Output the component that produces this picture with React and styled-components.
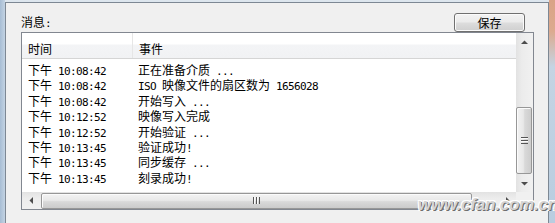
import React from 'react';
import styled, { createGlobalStyle } from 'styled-components';

const GlobalStyle = createGlobalStyle`
  html, body {
    margin: 0;
    padding: 0;
    overflow: hidden;
  }
  body {
    font-family: "Noto Sans CJK SC", "Noto Sans", sans-serif;
    font-size: 12px;
    color: #000;
  }
`;

const Desktop = styled.div`
  position: relative;
  width: 555px;
  height: 223px;
  box-sizing: border-box;
  padding: 2px 6px 0 5px;
  background:
    linear-gradient(to bottom, #d9a386 0, #dcaa8f 14%, #c4d4e3 30%, #b9cde0 100%) right top / 6px 100% no-repeat,
    linear-gradient(to right, #a7bdd4, #c3d3e3) left top / 5px 100% no-repeat,
    #dde6ee;
  overflow: hidden;
`;

const Dialog = styled.div`
  height: 100%;
  box-sizing: border-box;
  display: flex;
  flex-direction: column;
  padding: 0 14px 0 15px;
  background: #f0f0f0;
  border: 1px solid #7d8894;
  border-bottom: none;
`;

const Toolbar = styled.div`
  height: 29px;
  display: flex;
  align-items: flex-end;
  justify-content: space-between;
  padding-right: 9px;
`;

const Label = styled.div`
  line-height: 14px;
  margin-bottom: 1px;
`;

const Button = styled.button`
  width: 71px;
  height: 19px;
  box-sizing: border-box;
  padding: 0;
  font: inherit;
  line-height: 16px;
  color: #000;
  border: 1px solid #707070;
  border-radius: 3px;
  background: linear-gradient(to bottom, #f3f3f3 0, #ebebeb 48%, #dddddd 52%, #cfcfcf 100%);
  box-shadow: inset 0 0 0 1px #fbfbfb;
`;

const ListBox = styled.div`
  height: 178px;
  box-sizing: border-box;
  border: 1px solid #828790;
  background: #fff;
  display: grid;
  grid-template-columns: 1fr 17px;
  grid-template-rows: 1fr 17px;
`;

const Content = styled.div`
  overflow: hidden;
`;

const Header = styled.div`
  display: flex;
  height: 25px;
  border-bottom: 1px solid #d5d5d5;
  background: linear-gradient(to bottom, #ffffff 0, #ffffff 44%, #f3f4f6 48%, #f1f2f4 100%);
`;

const HeaderCell = styled.div`
  width: ${p => (p.$width ? `${p.$width}px` : 'auto')};
  flex: ${p => (p.$width ? 'none' : '1')};
  box-sizing: border-box;
  display: flex;
  align-items: center;
  padding: 5px 0 0 6px;
  border-right: ${p => (p.$divider ? '1px solid #e6e6e6' : 'none')};
`;

const Rows = styled.div`
  padding-top: 3px;
`;

const Row = styled.div`
  display: flex;
  height: 15.4px;
  line-height: 15.4px;
  white-space: nowrap;
`;

const Cell = styled.div`
  width: ${p => (p.$width ? `${p.$width}px` : 'auto')};
  flex: ${p => (p.$width ? 'none' : '1')};
  box-sizing: border-box;
  padding-left: 6px;
`;

const Latin = styled.span`
  font-family: "DejaVu Sans Mono", "Liberation Mono", monospace;
  font-size: 11px;
  letter-spacing: -0.62px;
  white-space: pre;
`;

const VScroll = styled.div`
  display: flex;
  flex-direction: column;
  background: linear-gradient(to right, #e2e2e2 0, #ececec 35%, #f1f1f1 100%);
`;

const HScroll = styled.div`
  display: flex;
  background: linear-gradient(to bottom, #e2e2e2 0, #ececec 35%, #f1f1f1 100%);
`;

const ArrowButton = styled.div`
  flex: none;
  width: 17px;
  height: 17px;
  display: flex;
  align-items: center;
  justify-content: center;
`;

const VTrack = styled.div`
  flex: 1;
  display: flex;
  flex-direction: column;
  justify-content: flex-end;
  padding: 0 1px 1px 0;
`;

const HTrack = styled.div`
  flex: 1;
  display: flex;
  align-items: center;
  padding-left: 2px;
`;

const VThumb = styled.div`
  height: 67px;
  box-sizing: border-box;
  border: 1px solid #979797;
  border-radius: 2px;
  background: linear-gradient(to right, #f2f2f2 0, #e8e8e8 45%, #d9d9d9 55%, #cdcdcd 100%);
  box-shadow: inset 1px 1px 0 #fbfbfb;
  display: flex;
  align-items: center;
  justify-content: center;
`;

const HThumb = styled.div`
  width: 431px;
  height: 16px;
  box-sizing: border-box;
  border: 1px solid #979797;
  border-radius: 2px;
  background: linear-gradient(to bottom, #f3f3f3 0, #e9e9e9 45%, #d9d9d9 55%, #cbcbcb 100%);
  box-shadow: inset 1px 1px 0 #fbfbfb;
  display: flex;
  align-items: center;
  justify-content: center;
`;

const Corner = styled.div`
  background: #f0f0f0;
`;

const Watermark = styled.div`
  position: absolute;
  right: -3px;
  bottom: 8px;
  font-family: "Liberation Sans", Arial, sans-serif;
  font-size: 17px;
  font-weight: bold;
  font-style: italic;
  letter-spacing: -0.2px;
  color: #d4d4d4;
  text-shadow: 1px 1px 0 #6e6e6e, -1px -1px 0 #ffffff, 1px -1px 0 #ffffff, -1px 1px 0 #ffffff;
  pointer-events: none;
`;

const Arrow = ({ dir }) => {
  const points = {
    up: '0,4 3.5,0.5 7,4',
    down: '0,0 3.5,3.5 7,0',
    left: '4,0 0.5,3.5 4,7',
    right: '0,0 3.5,3.5 0,7',
  }[dir];
  const vertical = dir === 'up' || dir === 'down';
  return (
    <svg width={vertical ? 7 : 4} height={vertical ? 4 : 7} viewBox={vertical ? '0 0 7 4' : '0 0 4 7'}>
      <polygon points={points} fill="#4d4d4d" />
    </svg>
  );
};

const Grip = ({ horizontal }) => (
  <svg width={horizontal ? 7 : 7} height={7} viewBox="0 0 7 7">
    {[0, 3, 6].map(o =>
      horizontal ? (
        <g key={o}>
          <rect x={o} y="0" width="1" height="7" fill="#555" />
          {o < 6 && <rect x={o + 1} y="0" width="1" height="7" fill="#fafafa" />}
        </g>
      ) : (
        <g key={o}>
          <rect x="0" y={o} width="7" height="1" fill="#555" />
          {o < 6 && <rect x="0" y={o + 1} width="7" height="1" fill="#fafafa" />}
        </g>
      )
    )}
  </svg>
);

// wrap ascii runs so they get the narrow mono face, like the old dialog font
const Mixed = ({ text }) =>
  text
    .split(/([\x20-\x7e]+)/)
    .filter(Boolean)
    .map((part, i) => (/^[\x20-\x7e]+$/.test(part) ? <Latin key={i}>{part}</Latin> : part));

const messages = [
  { time: '下午 10:08:42', event: '正在准备介质 ...' },
  { time: '下午 10:08:42', event: 'ISO 映像文件的扇区数为 1656028' },
  { time: '下午 10:08:42', event: '开始写入 ...' },
  { time: '下午 10:12:52', event: '映像写入完成' },
  { time: '下午 10:12:52', event: '开始验证 ...' },
  { time: '下午 10:13:45', event: '验证成功!' },
  { time: '下午 10:13:45', event: '同步缓存 ...' },
  { time: '下午 10:13:45', event: '刻录成功!' },
];

const App = () => (
  <>
    <GlobalStyle />
    <Desktop>
      <Dialog>
        <Toolbar>
          <Label><Mixed text="消息:" /></Label>
          <Button>保存</Button>
        </Toolbar>
        <ListBox>
          <Content>
            <Header>
              <HeaderCell $width={111} $divider>时间</HeaderCell>
              <HeaderCell>事件</HeaderCell>
            </Header>
            <Rows>
              {messages.map((m, i) => (
                <Row key={i}>
                  <Cell $width={110}><Mixed text={m.time} /></Cell>
                  <Cell><Mixed text={m.event} /></Cell>
                </Row>
              ))}
            </Rows>
          </Content>
          <VScroll>
            <ArrowButton><Arrow dir="up" /></ArrowButton>
            <VTrack>
              <VThumb><Grip /></VThumb>
            </VTrack>
            <ArrowButton><Arrow dir="down" /></ArrowButton>
          </VScroll>
          <HScroll>
            <ArrowButton><Arrow dir="left" /></ArrowButton>
            <HTrack>
              <HThumb><Grip horizontal /></HThumb>
            </HTrack>
            <ArrowButton><Arrow dir="right" /></ArrowButton>
          </HScroll>
          <Corner />
        </ListBox>
      </Dialog>
      <Watermark>www.cfan.com.cn</Watermark>
    </Desktop>
  </>
);

export default App;
